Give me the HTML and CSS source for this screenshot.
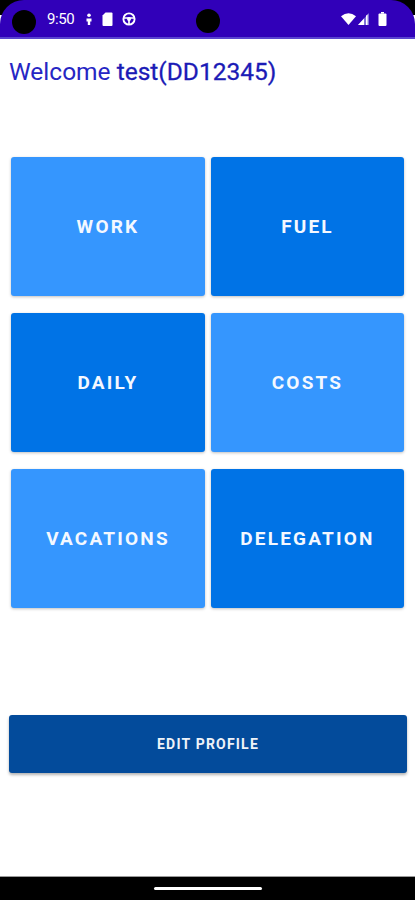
FILE: index.html
```html
<!DOCTYPE html>
<html lang="en">
<head>
    <meta charset="UTF-8">
    <meta name="viewport" content="width=device-width, initial-scale=1.0">
    <title>Welcome</title>
    <link rel="stylesheet" href="styles.css">
</head>
<body>
    <div class="screen">
        <div class="status-bar">
            <span class="cam cam-left"></span>
            <span class="cam cam-mid"></span>
            <div class="status-left">
                <span class="time">9:50</span>
                <svg class="sicon" width="8" height="13" viewBox="0 0 8 13">
                    <circle cx="4" cy="2.2" r="1.8" fill="#fff"/>
                    <path d="M1.5 5.5 H6.5 V8.5 H5.2 V12 H2.8 V8.5 H1.5 Z" fill="#fff"/>
                </svg>
                <svg class="sicon" width="11" height="14" viewBox="0 0 11 14">
                    <path d="M3.5 0.5 H9.5 a1 1 0 0 1 1 1 V13 a1 1 0 0 1 -1 1 H1.5 a1 1 0 0 1 -1 -1 V3.5 Z" fill="#fff"/>
                </svg>
                <svg class="sicon" width="14" height="14" viewBox="0 0 14 14">
                    <circle cx="7" cy="7" r="5.6" fill="none" stroke="#fff" stroke-width="1.9"/>
                    <circle cx="7" cy="7" r="2" fill="#fff"/>
                    <path d="M1.5 6 H12.5 M7 7 V12.5" stroke="#fff" stroke-width="1.7"/>
                </svg>
            </div>
            <div class="status-right">
                <svg width="15" height="12" viewBox="0 0 15 12">
                    <path d="M0 3.2 Q7.5 -2.6 15 3.2 L7.5 12 Z" fill="#fff"/>
                </svg>
                <svg width="11" height="12" viewBox="0 0 11 12">
                    <path d="M11 0 V12 H0 Z" fill="#7f6fd8"/>
                    <path d="M6 5.5 V12 H0 Z" fill="#fff"/>
                    <path d="M8 2.7 V12 H9.6 V1.2 Z" fill="#fff"/>
                </svg>
                <svg width="9" height="14" viewBox="0 0 9 14">
                    <rect x="3" y="0" width="3" height="1.6" fill="#fff"/>
                    <rect x="0.5" y="1.6" width="8" height="12.4" rx="1" fill="#fff"/>
                </svg>
            </div>
        </div>

        <div class="content">
            <h1 class="welcome">Welcome <span class="user">test(DD12345)</span></h1>

            <div class="menu-grid">
                <button class="tile light">WORK</button>
                <button class="tile dark">FUEL</button>
                <button class="tile dark">DAILY</button>
                <button class="tile light">COSTS</button>
                <button class="tile light">VACATIONS</button>
                <button class="tile dark">DELEGATION</button>
            </div>

            <button class="edit-btn">EDIT PROFILE</button>
        </div>

        <div class="nav-bar">
            <span class="handle"></span>
        </div>
    </div>
</body>
</html>
```

FILE: styles.css
```css
body {
    margin: 0;
    background-color: #000;
    font-family: Roboto, "Noto Sans", sans-serif;
}
.screen {
    width: 415px;
    height: 900px;
    display: flex;
    flex-direction: column;
    background-color: #fff;
    overflow: hidden;
}
.status-bar {
    position: relative;
    height: 37px;
    flex-shrink: 0;
    background-color: #3100b9;
    border-radius: 24px 24px 0 0;
    border-bottom: 2px solid #5a45cf;
    display: flex;
    align-items: center;
    justify-content: space-between;
    padding: 0 28px 0 47px;
    box-shadow: 0 -24px 0 0 #000;
}
.cam {
    position: absolute;
    width: 24px;
    height: 24px;
    border-radius: 50%;
    background-color: #000;
}
.cam-left {
    left: 12px;
    top: 10px;
}
.cam-mid {
    left: 196px;
    top: 9px;
}
.status-left {
    display: flex;
    align-items: center;
    gap: 9px;
    margin-top: 1px;
}
.time {
    color: #fff;
    font-size: 15px;
    letter-spacing: -0.4px;
    margin-right: 2px;
}
.status-right {
    display: flex;
    align-items: center;
    gap: 2px;
}
.status-right svg:last-child {
    margin-left: 7px;
}
.content {
    flex: 1;
    display: flex;
    flex-direction: column;
}
.welcome {
    margin: 19px 0 0 9px;
    font-size: 24.5px;
    font-weight: 400;
    color: #2626c4;
    line-height: 28px;
}
.user {
    color: #1b1bb6;
    -webkit-text-stroke: 0.3px #1b1bb6;
}
.menu-grid {
    display: grid;
    grid-template-columns: 194px 193px;
    grid-auto-rows: 139px;
    column-gap: 6px;
    row-gap: 17px;
    margin: 71px 11px 0 11px;
}
.tile {
    border: none;
    border-radius: 3px;
    color: #f4f8ff;
    font-family: Roboto, sans-serif;
    font-size: 19px;
    font-weight: 700;
    letter-spacing: 2.2px;
    box-shadow: 0 1px 3px rgba(0, 0, 0, 0.25);
    cursor: pointer;
}
.tile.light {
    background-color: #3596fe;
}
.tile.dark {
    background-color: #0073e6;
}
.edit-btn {
    margin: 107px 8px 0 9px;
    height: 58px;
    border: none;
    border-radius: 3px;
    background-color: #034b9b;
    color: #eef2f8;
    font-family: Roboto, sans-serif;
    font-size: 14px;
    font-weight: 700;
    letter-spacing: 1.2px;
    box-shadow: 0 2px 3px rgba(0, 0, 0, 0.3);
    cursor: pointer;
}
.nav-bar {
    height: 24px;
    flex-shrink: 0;
    background-color: #000;
    border-top: 1px solid #9a9a9a;
    display: flex;
    justify-content: center;
    padding-top: 10px;
    box-sizing: border-box;
}
.handle {
    width: 108px;
    height: 3px;
    border-radius: 2px;
    background-color: #fff;
}
```
